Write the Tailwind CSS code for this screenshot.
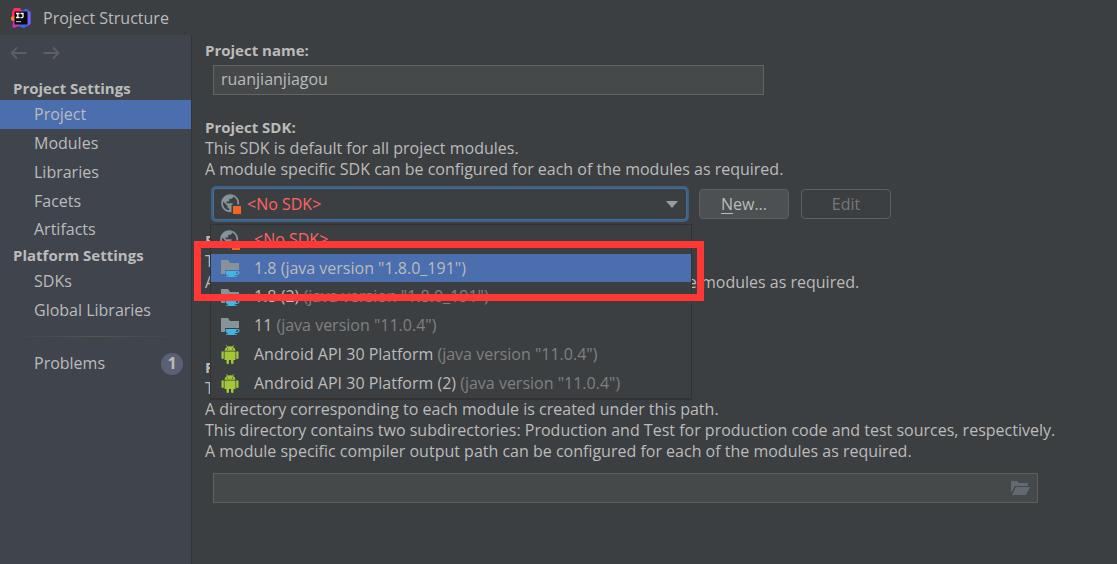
<!DOCTYPE html>
<html lang="en">
<head>
<meta charset="utf-8">
<title>Project Structure</title>
<script src="https://cdn.jsdelivr.net/npm/@tailwindcss/browser@4"></script>
</head>
<body class="min-h-screen flex flex-col bg-[#3c3f41] text-[#bbbbbb] font-['Open_Sans',sans-serif] text-base leading-[21px]">
<svg class="hidden" aria-hidden="true">
  <symbol id="globe" viewBox="0 0 20 20">
    <path fill="#87939a" transform="translate(-1.600 -1.600) scale(.9)" d="M12 2C6.480 2 2 6.480 2 12s4.480 10 10 10 10-4.480 10-10S17.520 2 12 2zm-1 17.930c-3.950-.49-7-3.850-7-7.930 0-.62.080-1.210.21-1.790L9 15v1c0 1.100.9 2 2 2v1.930zm6.900-2.540c-.26-.81-1-1.390-1.900-1.390h-1v-3c0-.55-.45-1-1-1H8v-2h2c.55 0 1-.45 1-1V7h2c1.100 0 2-.9 2-2v-.41c2.930 1.190 5 4.060 5 7.410 0 2.080-.8 3.970-2.100 5.390z"/>
    <path fill="#3c3f41" d="M10.500 10.500H20V20h-9.500z"/>
    <path fill="#f26522" d="M12 12h8v8h-8z"/>
  </symbol>
  <symbol id="jdk" viewBox="0 0 20 20">
    <path fill="#87939a" d="M1 2h7l2 3h9v7H5v4H1z"/>
    <path fill="#40b6e0" fill-rule="evenodd" d="M5.500 13H17q3 0 2.500 2t-4 2q-.6 1-1.500 1.200h3V19H6v-.8h3q-3.500-1-3.500-5.200zm11 .8q-.1 1.300-.6 2.300 2.300-.1 2.500-1.200t-1.900-1.100z"/>
  </symbol>
  <symbol id="android" viewBox="0 0 20 20">
    <g fill="#a4c639">
      <path fill-rule="evenodd" d="M4.500 5.800q.1-2.700 2.500-3.900L6 .3l.6-.3 1.100 1.600q2.300-.7 4.600 0L13.400 0l.6.300-1 1.600q2.400 1.200 2.500 3.900zM7 3.500v1h1v-1zm5 0v1h1v-1z"/>
      <path d="M4.500 6.500h11V15h-2v3q0 1-1.200 1T11 18v-3H9v3q0 1-1.300 1t-1.200-1v-3h-2z"/>
      <rect x="1.500" y="6.300" width="2.300" height="7.700" rx="1.100"/>
      <rect x="16.200" y="6.300" width="2.300" height="7.700" rx="1.100"/>
    </g>
  </symbol>
</svg>

<header class="flex h-[35px] shrink-0 items-center gap-3 pl-[11px]">
  <svg class="size-5" viewBox="0 0 20 20" aria-hidden="true">
    <path fill="#ff2d63" d="M1 4 3 0h6l3 4-5 10-6-2z"/>
    <path fill="#fc801d" d="M0 9 4 8v6l-4-2z"/>
    <path fill="#c735c4" d="M2 13h7l2 4-7 2.500H1.500z"/>
    <path fill="#3b66f5" d="M11 3 15 .5 19.500 4v12L13 20l-6-2 6-4z"/>
    <path fill="#7b5cf0" d="M16 2.500 19.500 4v12l-3 2z"/>
    <path fill="#0a0a0c" d="M3.500 3.500h13v13h-13z"/>
    <path fill="none" stroke="#fff" stroke-width="1.300" d="M5 5.500h3.600M6.800 5.500v4M5 9.500h3.600M9.500 5.500H12v3q0 1.200-1.200 1.200H9.500"/>
    <path fill="#aaa" d="M5 13h5v1.200H5z"/>
  </svg>
  <h1 class="pt-0.5">Project Structure</h1>
</header>

<div class="flex flex-1 items-stretch">
  <aside class="w-48 shrink-0 border-r border-[#323435] bg-[#40444d]">
    <div class="flex h-[42px] items-start gap-4 pt-2.5 pl-2.5 text-[#5c5f63]">
      <button aria-label="Back"><svg class="h-4 w-[17px]" viewBox="0 0 17 16" fill="none" stroke="currentColor" stroke-width="1.800"><path d="M16.500 8H2M7 2.500 1.500 8 7 13.500"/></svg></button>
      <button aria-label="Forward"><svg class="h-4 w-[17px]" viewBox="0 0 17 16" fill="none" stroke="currentColor" stroke-width="1.800"><path d="M.5 8H15M10 2.500 15.500 8 10 13.500"/></svg></button>
    </div>
    <nav aria-label="Settings">
      <h2 class="flex h-[23px] items-center pl-[13px] text-[15px] font-bold">Project Settings</h2>
      <a href="#project" class="flex h-[29px] items-center bg-[#4b6eaf] pl-[34px]">Project</a>
      <a href="#modules" class="flex h-[29px] items-center pl-[34px]">Modules</a>
      <a href="#libraries" class="flex h-[29px] items-center pl-[34px]">Libraries</a>
      <a href="#facets" class="flex h-7 items-center pl-[34px]">Facets</a>
      <a href="#artifacts" class="flex h-[29px] items-center pl-[34px]">Artifacts</a>
      <h2 class="flex h-[23px] items-center pl-[13px] text-[15px] font-bold">Platform Settings</h2>
      <a href="#sdks" class="flex h-[29px] items-center pl-[34px]">SDKs</a>
      <a href="#global" class="flex h-[29px] items-center pl-[34px]">Global Libraries</a>
      <div class="mx-2.5 mt-[11px] mb-3 h-px bg-linear-to-r from-transparent via-[#55564f] to-transparent"></div>
      <a href="#problems" class="flex h-[29px] items-center justify-between pr-2 pl-[34px]">Problems
        <span class="grid size-[22px] place-items-center rounded-full bg-[#5b6074] font-bold">1</span></a>
    </nav>
  </aside>

  <main class="min-w-0 flex-1 pt-[5px] pr-[79px] pl-[13px]">
    <label for="name" class="block text-[15px] font-bold">Project name:</label>
    <input id="name" value="ruanjianjiagou" class="mt-1 ml-2 block h-[30px] w-full max-w-[551px] border border-[#646464] bg-[#45494a] px-[7px] pb-0.5">

    <label for="sdk" class="mt-[22px] block text-[15px] font-bold">Project SDK:</label>
    <p>This SDK is default for all project modules.</p>
    <p>A module specific SDK can be configured for each of the modules as required.</p>
    <div class="relative mt-1.5 flex items-center gap-2.5 pl-1.5">
      <div class="relative w-full max-w-[478px]">
        <select id="sdk" class="block h-9 w-full appearance-none rounded-[5px] border-3 border-[#3d6185] bg-[#3c3f41] pl-[33px] text-[#ff6464] outline-1 -outline-offset-3 outline-[#466d94]">
          <option>&lt;No SDK&gt;</option>
        </select>
        <svg class="absolute top-2 left-2.5 size-5" aria-hidden="true"><use href="#globe"/></svg>
        <svg class="pointer-events-none absolute top-[15px] right-[11px] h-[7px] w-3" viewBox="0 0 12 7" aria-hidden="true"><path fill="#9a9da0" d="M0 0h12L6 7z"/></svg>
      </div>
      <button class="h-[30px] w-[90px] shrink-0 rounded-[4px] border border-[#5e6060] bg-[#4c5052]"><span class="underline underline-offset-3">N</span>ew...</button>
      <button disabled class="ml-0.5 h-[30px] w-[90px] shrink-0 rounded-[4px] border border-[#5e6060] text-[#777777]">Edit</button>

      <ul role="listbox" aria-label="Project SDK" class="absolute top-[38px] left-[5px] z-10 w-[482px] border border-b-2 border-[#323232] bg-[#3c3f41] text-[#bbbbbb]">
        <li role="option" class="flex h-[29px] items-center gap-3.5 pl-[9px] text-[#ff6464]"><svg class="size-5" aria-hidden="true"><use href="#globe"/></svg><span>&lt;No SDK&gt;</span></li>
        <li role="option" aria-selected="true" class="flex h-7 items-center gap-3.5 bg-[#4b6eaf] pl-[9px]"><svg class="size-5" aria-hidden="true"><use href="#jdk"/></svg><span>1.8 (java version "1.8.0_191")</span></li>
        <li role="option" class="flex h-[29px] items-center gap-3.5 pl-[9px]"><svg class="size-5" aria-hidden="true"><use href="#jdk"/></svg><span>1.8 (2) <span class="text-[#808080]">(java version "1.8.0_191")</span></span></li>
        <li role="option" class="flex h-[29px] items-center gap-3.5 pl-[9px]"><svg class="size-5" aria-hidden="true"><use href="#jdk"/></svg><span>11 <span class="text-[#808080]">(java version "11.0.4")</span></span></li>
        <li role="option" class="flex h-[29px] items-center gap-3.5 pl-[9px]"><svg class="size-5" aria-hidden="true"><use href="#android"/></svg><span>Android API 30 Platform <span class="text-[#808080]">(java version "11.0.4")</span></span></li>
        <li role="option" class="flex h-[29px] items-center gap-3.5 pl-[9px]"><svg class="size-5" aria-hidden="true"><use href="#android"/></svg><span>Android API 30 Platform (2) <span class="text-[#808080]">(java version "11.0.4")</span></span></li>
      </ul>
      <div class="pointer-events-none absolute top-[55px] -left-[11px] z-20 h-[60px] w-[510px] border-7 border-[#ff3835]"></div>
    </div>

    <h3 class="mt-2 text-[15px] font-bold">Project language level:</h3>
    <p>This language level is default for all project modules.</p>
    <p>A module specific language level can be configured for each of the modules as required.</p>

    <label for="output" class="mt-16 block text-[15px] font-bold">Project compiler output:</label>
    <p>This path is used to store all project compilation results.</p>
    <p>A directory corresponding to each module is created under this path.</p>
    <p class="-mr-10">This directory contains two subdirectories: Production and Test for production code and test sources, respectively.</p>
    <p>A module specific compiler output path can be configured for each of the modules as required.</p>
    <div class="mt-[11px] ml-2 flex h-[30px] items-center border border-[#5e6060] bg-[#45494a] pr-[7px]">
      <input id="output" class="h-full min-w-0 flex-1 bg-transparent px-[7px]">
      <button aria-label="Browse"><svg class="block h-[15px] w-[19px]" viewBox="0 0 19 15"><path fill="#606a70" d="M0 0h6l2 2h9v3H4L0 12zM5 6h14l-4 8H1z"/></svg></button>
    </div>
  </main>
</div>
</body>
</html>
